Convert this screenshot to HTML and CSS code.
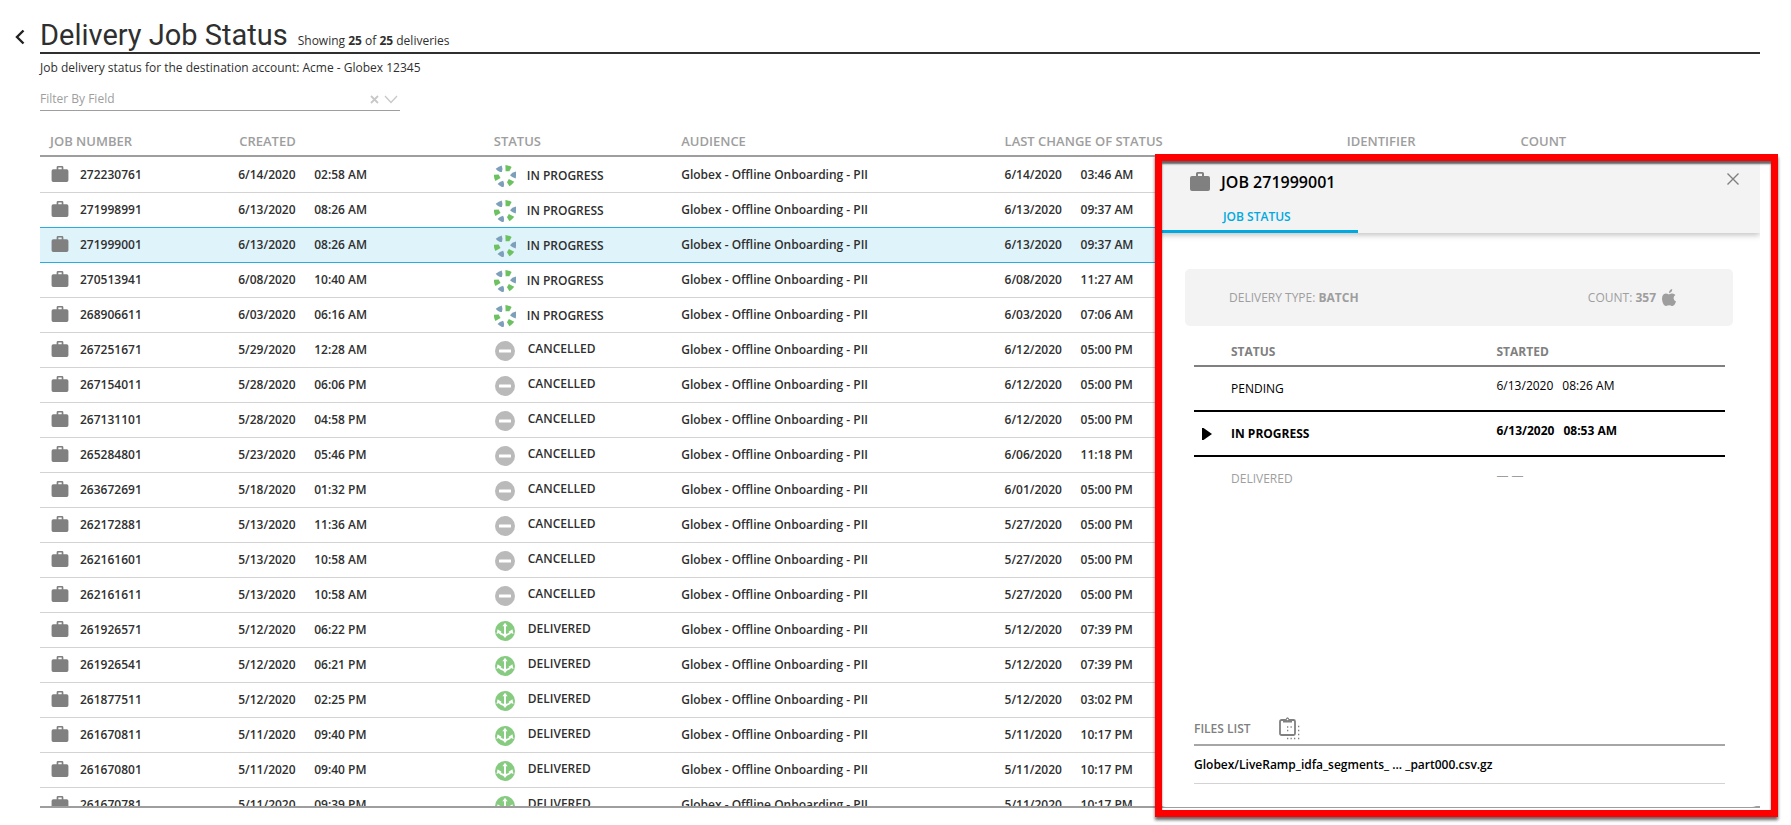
FILE: index.html
```html
<!DOCTYPE html>
<html lang="en">
<head>
<meta charset="utf-8">
<title>Delivery Job Status</title>
<link rel="stylesheet" href="styles.css">
</head>
<body>
<svg class="sprite" aria-hidden="true">
  <symbol id="case" viewBox="0 0 20 19"><path d="M6 4V1.6Q6 0 7.600 0H12.400Q14 0 14 1.600V4H18Q20 4 20 6V17Q20 19 18 19H2Q0 19 0 17V6Q0 4 2 4ZM8 4H12V1.800H8Z" fill="#808080" fill-rule="evenodd"/></symbol>
  <symbol id="progress" viewBox="-11 -11 22 22">
    <g id="pair"><path d="M.4-10.900Q4-10.600 6.600-9L4.400-4.800L.6-4.800Z" fill="#6cc261"/><path d="M11-4.400Q11.300-.5 10.700 2.400Q7.500 2 5-.7Q6.800-3.800 11-4.400Z" fill="#7d9fba"/></g>
    <use href="#pair" transform="rotate(120)"/><use href="#pair" transform="rotate(240)"/>
  </symbol>
  <symbol id="cancel" viewBox="0 0 20 20"><circle cx="10" cy="10" r="10" fill="#bababa"/><rect x="4" y="8.500" width="12" height="3" rx=".5" fill="#fff"/></symbol>
  <symbol id="deliver" viewBox="0 0 20 20"><circle cx="10" cy="10" r="10" fill="#86cb80"/><path d="M10 4V14.500M4.200 10.500Q5.200 13.600 10 14Q14.800 13.600 15.800 10.500" fill="none" stroke="#fff" stroke-width="1.900"/><path d="M10 1.800L12.600 5.200H7.400ZM2.600 8.200L6.600 10.900L1.500 13ZM17.400 8.200L13.400 10.900L18.500 13ZM7.200 13.500H12.800L10 17Z" fill="#fff"/></symbol>
</svg>
<main class="page">
  <header class="page-head">
    <button class="back" aria-label="Back"><svg width="10" height="16" viewBox="0 0 10 16"><path d="M8.500 1.500L2 8L8.500 14.500" fill="none" stroke="#222" stroke-width="2.400"/></svg></button>
    <h1>Delivery Job Status</h1>
    <p class="showing">Showing <b>25</b> of <b>25</b> deliveries</p>
  </header>
  <p class="account">Job delivery status for the destination account: Acme - Globex 12345</p>
  <div class="filter">
    <input type="text" placeholder="Filter By Field" aria-label="Filter By Field">
    <button aria-label="Clear filter"><svg width="9" height="9" viewBox="0 0 9 9"><path d="M1 1L8 8M8 1L1 8" stroke="#c8c8c8" stroke-width="1.800"/></svg></button>
    <button aria-label="Open field list"><svg width="14" height="9" viewBox="0 0 14 9"><path d="M1 1L7 7.500L13 1" fill="none" stroke="#c8c8c8" stroke-width="1.300"/></svg></button>
  </div>
  <div class="board">
    <div class="scroll">
      <table class="jobs">
        <colgroup><col class="c-job"><col class="c-created"><col class="c-status"><col class="c-audience"><col class="c-change"><col class="c-ident"><col></colgroup>
        <thead><tr><th>JOB NUMBER</th><th>CREATED</th><th>STATUS</th><th>AUDIENCE</th><th>LAST CHANGE OF STATUS</th><th>IDENTIFIER</th><th>COUNT</th></tr></thead>
        <tbody>
          <tr><td><svg class="case"><use href="#case"/></svg>272230761</td><td><span class="date">6/14/2020</span>02:58 AM</td><td><svg class="state spin"><use href="#progress"/></svg>IN PROGRESS</td><td>Globex - Offline Onboarding - PII</td><td><span class="date">6/14/2020</span>03:46 AM</td><td></td><td></td></tr>
          <tr><td><svg class="case"><use href="#case"/></svg>271998991</td><td><span class="date">6/13/2020</span>08:26 AM</td><td><svg class="state spin"><use href="#progress"/></svg>IN PROGRESS</td><td>Globex - Offline Onboarding - PII</td><td><span class="date">6/13/2020</span>09:37 AM</td><td></td><td></td></tr>
          <tr class="selected"><td><svg class="case"><use href="#case"/></svg>271999001</td><td><span class="date">6/13/2020</span>08:26 AM</td><td><svg class="state spin"><use href="#progress"/></svg>IN PROGRESS</td><td>Globex - Offline Onboarding - PII</td><td><span class="date">6/13/2020</span>09:37 AM</td><td></td><td></td></tr>
          <tr><td><svg class="case"><use href="#case"/></svg>270513941</td><td><span class="date">6/08/2020</span>10:40 AM</td><td><svg class="state spin"><use href="#progress"/></svg>IN PROGRESS</td><td>Globex - Offline Onboarding - PII</td><td><span class="date">6/08/2020</span>11:27 AM</td><td></td><td></td></tr>
          <tr><td><svg class="case"><use href="#case"/></svg>268906611</td><td><span class="date">6/03/2020</span>06:16 AM</td><td><svg class="state spin"><use href="#progress"/></svg>IN PROGRESS</td><td>Globex - Offline Onboarding - PII</td><td><span class="date">6/03/2020</span>07:06 AM</td><td></td><td></td></tr>
          <tr><td><svg class="case"><use href="#case"/></svg>267251671</td><td><span class="date">5/29/2020</span>12:28 AM</td><td><svg class="state"><use href="#cancel"/></svg>CANCELLED</td><td>Globex - Offline Onboarding - PII</td><td><span class="date">6/12/2020</span>05:00 PM</td><td></td><td></td></tr>
          <tr><td><svg class="case"><use href="#case"/></svg>267154011</td><td><span class="date">5/28/2020</span>06:06 PM</td><td><svg class="state"><use href="#cancel"/></svg>CANCELLED</td><td>Globex - Offline Onboarding - PII</td><td><span class="date">6/12/2020</span>05:00 PM</td><td></td><td></td></tr>
          <tr><td><svg class="case"><use href="#case"/></svg>267131101</td><td><span class="date">5/28/2020</span>04:58 PM</td><td><svg class="state"><use href="#cancel"/></svg>CANCELLED</td><td>Globex - Offline Onboarding - PII</td><td><span class="date">6/12/2020</span>05:00 PM</td><td></td><td></td></tr>
          <tr><td><svg class="case"><use href="#case"/></svg>265284801</td><td><span class="date">5/23/2020</span>05:46 PM</td><td><svg class="state"><use href="#cancel"/></svg>CANCELLED</td><td>Globex - Offline Onboarding - PII</td><td><span class="date">6/06/2020</span>11:18 PM</td><td></td><td></td></tr>
          <tr><td><svg class="case"><use href="#case"/></svg>263672691</td><td><span class="date">5/18/2020</span>01:32 PM</td><td><svg class="state"><use href="#cancel"/></svg>CANCELLED</td><td>Globex - Offline Onboarding - PII</td><td><span class="date">6/01/2020</span>05:00 PM</td><td></td><td></td></tr>
          <tr><td><svg class="case"><use href="#case"/></svg>262172881</td><td><span class="date">5/13/2020</span>11:36 AM</td><td><svg class="state"><use href="#cancel"/></svg>CANCELLED</td><td>Globex - Offline Onboarding - PII</td><td><span class="date">5/27/2020</span>05:00 PM</td><td></td><td></td></tr>
          <tr><td><svg class="case"><use href="#case"/></svg>262161601</td><td><span class="date">5/13/2020</span>10:58 AM</td><td><svg class="state"><use href="#cancel"/></svg>CANCELLED</td><td>Globex - Offline Onboarding - PII</td><td><span class="date">5/27/2020</span>05:00 PM</td><td></td><td></td></tr>
          <tr><td><svg class="case"><use href="#case"/></svg>262161611</td><td><span class="date">5/13/2020</span>10:58 AM</td><td><svg class="state"><use href="#cancel"/></svg>CANCELLED</td><td>Globex - Offline Onboarding - PII</td><td><span class="date">5/27/2020</span>05:00 PM</td><td></td><td></td></tr>
          <tr><td><svg class="case"><use href="#case"/></svg>261926571</td><td><span class="date">5/12/2020</span>06:22 PM</td><td><svg class="state"><use href="#deliver"/></svg>DELIVERED</td><td>Globex - Offline Onboarding - PII</td><td><span class="date">5/12/2020</span>07:39 PM</td><td></td><td></td></tr>
          <tr><td><svg class="case"><use href="#case"/></svg>261926541</td><td><span class="date">5/12/2020</span>06:21 PM</td><td><svg class="state"><use href="#deliver"/></svg>DELIVERED</td><td>Globex - Offline Onboarding - PII</td><td><span class="date">5/12/2020</span>07:39 PM</td><td></td><td></td></tr>
          <tr><td><svg class="case"><use href="#case"/></svg>261877511</td><td><span class="date">5/12/2020</span>02:25 PM</td><td><svg class="state"><use href="#deliver"/></svg>DELIVERED</td><td>Globex - Offline Onboarding - PII</td><td><span class="date">5/12/2020</span>03:02 PM</td><td></td><td></td></tr>
          <tr><td><svg class="case"><use href="#case"/></svg>261670811</td><td><span class="date">5/11/2020</span>09:40 PM</td><td><svg class="state"><use href="#deliver"/></svg>DELIVERED</td><td>Globex - Offline Onboarding - PII</td><td><span class="date">5/11/2020</span>10:17 PM</td><td></td><td></td></tr>
          <tr><td><svg class="case"><use href="#case"/></svg>261670801</td><td><span class="date">5/11/2020</span>09:40 PM</td><td><svg class="state"><use href="#deliver"/></svg>DELIVERED</td><td>Globex - Offline Onboarding - PII</td><td><span class="date">5/11/2020</span>10:17 PM</td><td></td><td></td></tr>
          <tr><td><svg class="case"><use href="#case"/></svg>261670781</td><td><span class="date">5/11/2020</span>09:39 PM</td><td><svg class="state"><use href="#deliver"/></svg>DELIVERED</td><td>Globex - Offline Onboarding - PII</td><td><span class="date">5/11/2020</span>10:17 PM</td><td></td><td></td></tr>
        </tbody>
      </table>
    </div>
    <div class="overlay">
      <aside class="panel" aria-label="Job details">
        <header class="panel-head">
          <div class="panel-title">
            <svg width="20" height="19"><use href="#case"/></svg>
            <h2>JOB 271999001</h2>
            <button aria-label="Close"><svg width="12" height="12" viewBox="0 0 12 12"><path d="M.5.5L11.500 11.500M11.500.5L.5 11.500" stroke="#808080" stroke-width="1.400"/></svg></button>
          </div>
          <button class="tab">JOB STATUS</button>
        </header>
        <div class="summary">
          <span>DELIVERY TYPE: <b>BATCH</b></span>
          <span class="count"><span>COUNT: <b>357</b></span><svg width="14" height="17" viewBox="0 0 14 17"><path d="M10.200 0Q10.400 3.400 7 4.300Q6.900 1 10.200 0ZM7.100 5.200Q8 5.200 9.500 4.500Q12 4.100 13.400 6.100Q11.500 7.300 11.600 9.300Q11.700 11.500 14 12.500Q12.700 16.600 10.500 16.900Q9.600 16.900 8.700 16.400Q7.300 15.900 5.600 16.500Q4.500 17.100 3.800 16.900Q1.500 16.500.4 12.400Q-.8 7.600 1.700 5.300Q3.400 4 5.300 4.700Q6.400 5.200 7.100 5.200Z" fill="#9e9e9e"/></svg></span>
        </div>
        <table class="steps">
          <colgroup><col class="s-mark"><col class="s-status"><col></colgroup>
          <thead><tr><th></th><th>STATUS</th><th>STARTED</th></tr></thead>
          <tbody>
            <tr><td></td><td>PENDING</td><td class="when"><span>6/13/2020</span>08:26 AM</td></tr>
            <tr class="current"><td><svg width="10" height="12" viewBox="0 0 10 12"><path d="M0 0H1.500L10 6L1.500 12H0Z"/></svg></td><td>IN PROGRESS</td><td class="when"><span>6/13/2020</span>08:53 AM</td></tr>
            <tr class="future"><td></td><td>DELIVERED</td><td class="when">— —</td></tr>
          </tbody>
        </table>
        <section class="files">
          <div class="files-head">
            <h3>FILES LIST</h3>
            <button aria-label="Copy files list"><svg width="21" height="23" viewBox="0 0 21 23"><rect x="1" y="3" width="15" height="15" rx="1.500" fill="none" stroke="#808080" stroke-width="1.800"/><path d="M4 3H6.500Q7 .3 8.500.3Q10 .3 10.500 3H13V5.500H4Z" fill="#808080"/><circle cx="8.500" cy="2.500" r=".8" fill="#fff"/><path d="M8 10H9.300M11.500 10H12.800M8 13.500H9.300M19 9.500H20.300M19 13.500H20.300M19 17.500H20.300M8 21.500H9.300M11.500 21.500H12.800M15 21.500H16.300M19 21.500H20.300" stroke="#808080" stroke-width="1.300"/></svg></button>
          </div>
          <p>Globex/LiveRamp_idfa_segments_ ... _part000.csv.gz</p>
        </section>
      </aside>
    </div>
  </div>
</main>
</body>
</html>
```

FILE: styles.css
```css
* { box-sizing: border-box; }

body {
  margin: 0;
  overflow: hidden;
  background: #fff;
  color: #2f2f2f;
  font: 12px/18px "Open Sans", "Noto Sans", sans-serif;
}

h1, h2, h3, p { margin: 0; }

button {
  display: flex;
  align-items: center;
  padding: 0;
  border: 0;
  background: none;
  font: inherit;
  color: inherit;
}

.sprite { position: absolute; width: 0; height: 0; }

.page {
  display: flex;
  flex-direction: column;
  height: 100vh;
  padding: 16px 31px 17px 40px;
}

.page-head {
  position: relative;
  display: flex;
  align-items: baseline;
  gap: 10px;
  height: 38px;
  border-bottom: 2px solid #2f2f2f;
}

.back { position: absolute; left: -25px; top: 13px; }

h1 { font: 400 29px/38px Roboto, sans-serif; }

.account { padding-top: 5px; }

.filter {
  display: flex;
  align-items: center;
  gap: 5px;
  width: 360px;
  height: 25px;
  margin-top: 9px;
  padding: 2px 2px 0 0;
  border-bottom: 1px solid #9e9e9e;
}

.filter input {
  flex: 1;
  padding: 0;
  border: 0;
  outline: 0;
  font: inherit;
}

.filter input::placeholder { color: #9e9e9e; opacity: 1; }

.board { position: relative; flex: 1; min-height: 0; }

.scroll {
  height: 100%;
  overflow: hidden;
  border-bottom: 2px solid #9e9e9e;
}

table { width: 100%; border-spacing: 0; table-layout: fixed; }

th, td { padding: 0; text-align: left; white-space: nowrap; }

.c-job { width: 11%; }
.c-created { width: 14.8%; }
.c-status { width: 10.9%; }
.c-audience { width: 18.8%; }
.c-change { width: 19.9%; }
.c-ident { width: 10.1%; }

.jobs th {
  height: 46px;
  padding: 16px 10px 0;
  border-bottom: 2px solid #9e9e9e;
  color: #9e9e9e;
  font-size: 13px;
  font-weight: 600;
  vertical-align: top;
  line-height: 28px;
}

.jobs td {
  height: 35px;
  padding: 0 10px;
  border-top: 1px solid #d3d3d3;
  font-weight: 600;
}

.jobs td:nth-child(2) { padding-left: 9px; }
.jobs td:nth-child(3) { padding-top: 1px; }

.jobs tbody tr:first-child td { border-top-color: transparent; }
.jobs .selected td { background: #dff3fa; border-top-color: #27aee0; }
.jobs .selected + tr td { border-top-color: #27aee0; }

.case { width: 18px; height: 16px; margin: 0 11px 0 1px; vertical-align: -3px; }
.state { width: 20px; height: 20px; margin: 0 13px 0 1px; vertical-align: -8px; }
.spin { width: 22px; height: 22px; margin: 0 11px 0 0; vertical-align: -7px; }
.date { display: inline-block; width: 76px; }

.overlay {
  position: absolute;
  top: 46px;
  right: 0;
  bottom: 1px;
  width: 35%;
}

/* Highlight frame around the open job */
.overlay::after {
  content: "";
  position: absolute;
  inset: -3px -18px -10px -3px;
  border: 7px solid #f00;
  box-shadow: 0 3px 3px rgba(0, 0, 0, .6), inset 0 3px 2px rgba(0, 0, 0, .6);
  pointer-events: none;
}

.panel {
  display: flex;
  flex-direction: column;
  height: 100%;
  overflow: hidden;
  border-radius: 0 0 8px 8px;
  background: #fff;
  color: #000;
}

.panel-head {
  height: 76px;
  background: #f3f3f3;
  box-shadow: 0 2px 6px rgba(0, 0, 0, .25);
}

.panel-title {
  display: flex;
  align-items: center;
  gap: 11px;
  height: 48px;
  padding: 1px 21px 0 32px;
}

.panel-title h2 { flex: 1; font-size: 16px; font-weight: 600; }
.panel-title button { padding-bottom: 5px; }

.tab {
  width: 200px;
  height: 28px;
  padding: 0 0 2px 65px;
  border-bottom: 3px solid #00a9e0;
  color: #00a9e0;
  font-weight: 600;
}

.summary {
  display: flex;
  justify-content: space-between;
  align-items: center;
  height: 57px;
  margin: 36px 27px 0;
  padding: 0 57px 0 44px;
  border-radius: 5px;
  background: #f3f3f3;
  color: #9e9e9e;
}

.count { display: flex; align-items: center; gap: 6px; }

.steps { width: auto; margin: 0 35px 0 36px; }
.s-mark { width: 37px; }
.s-status { width: 50%; }

.steps th {
  height: 41px;
  padding-top: 13px;
  border-bottom: 2px solid #808080;
  color: #808080;
  font-weight: 700;
}

.steps td { height: 45px; border-bottom: 2px solid #000; }
.steps .current { font-weight: 700; }
.steps .current svg { display: block; margin-left: 8px; }
.steps .future td { border-bottom-color: transparent; color: #9e9e9e; }
.steps .when { padding-bottom: 5px; }
.when span { margin-right: 9px; }

.files { margin: auto 35px 23px 36px; }

.files-head {
  display: flex;
  align-items: center;
  gap: 28px;
  height: 34px;
  border-bottom: 2px solid #a6a6a6;
  color: #808080;
}

.files-head h3 { padding-top: 2px; font-size: 12px; font-weight: 600; }

.files p {
  height: 38px;
  border-bottom: 1px solid #d3d3d3;
  line-height: 38px;
  font-weight: 600;
}
```
